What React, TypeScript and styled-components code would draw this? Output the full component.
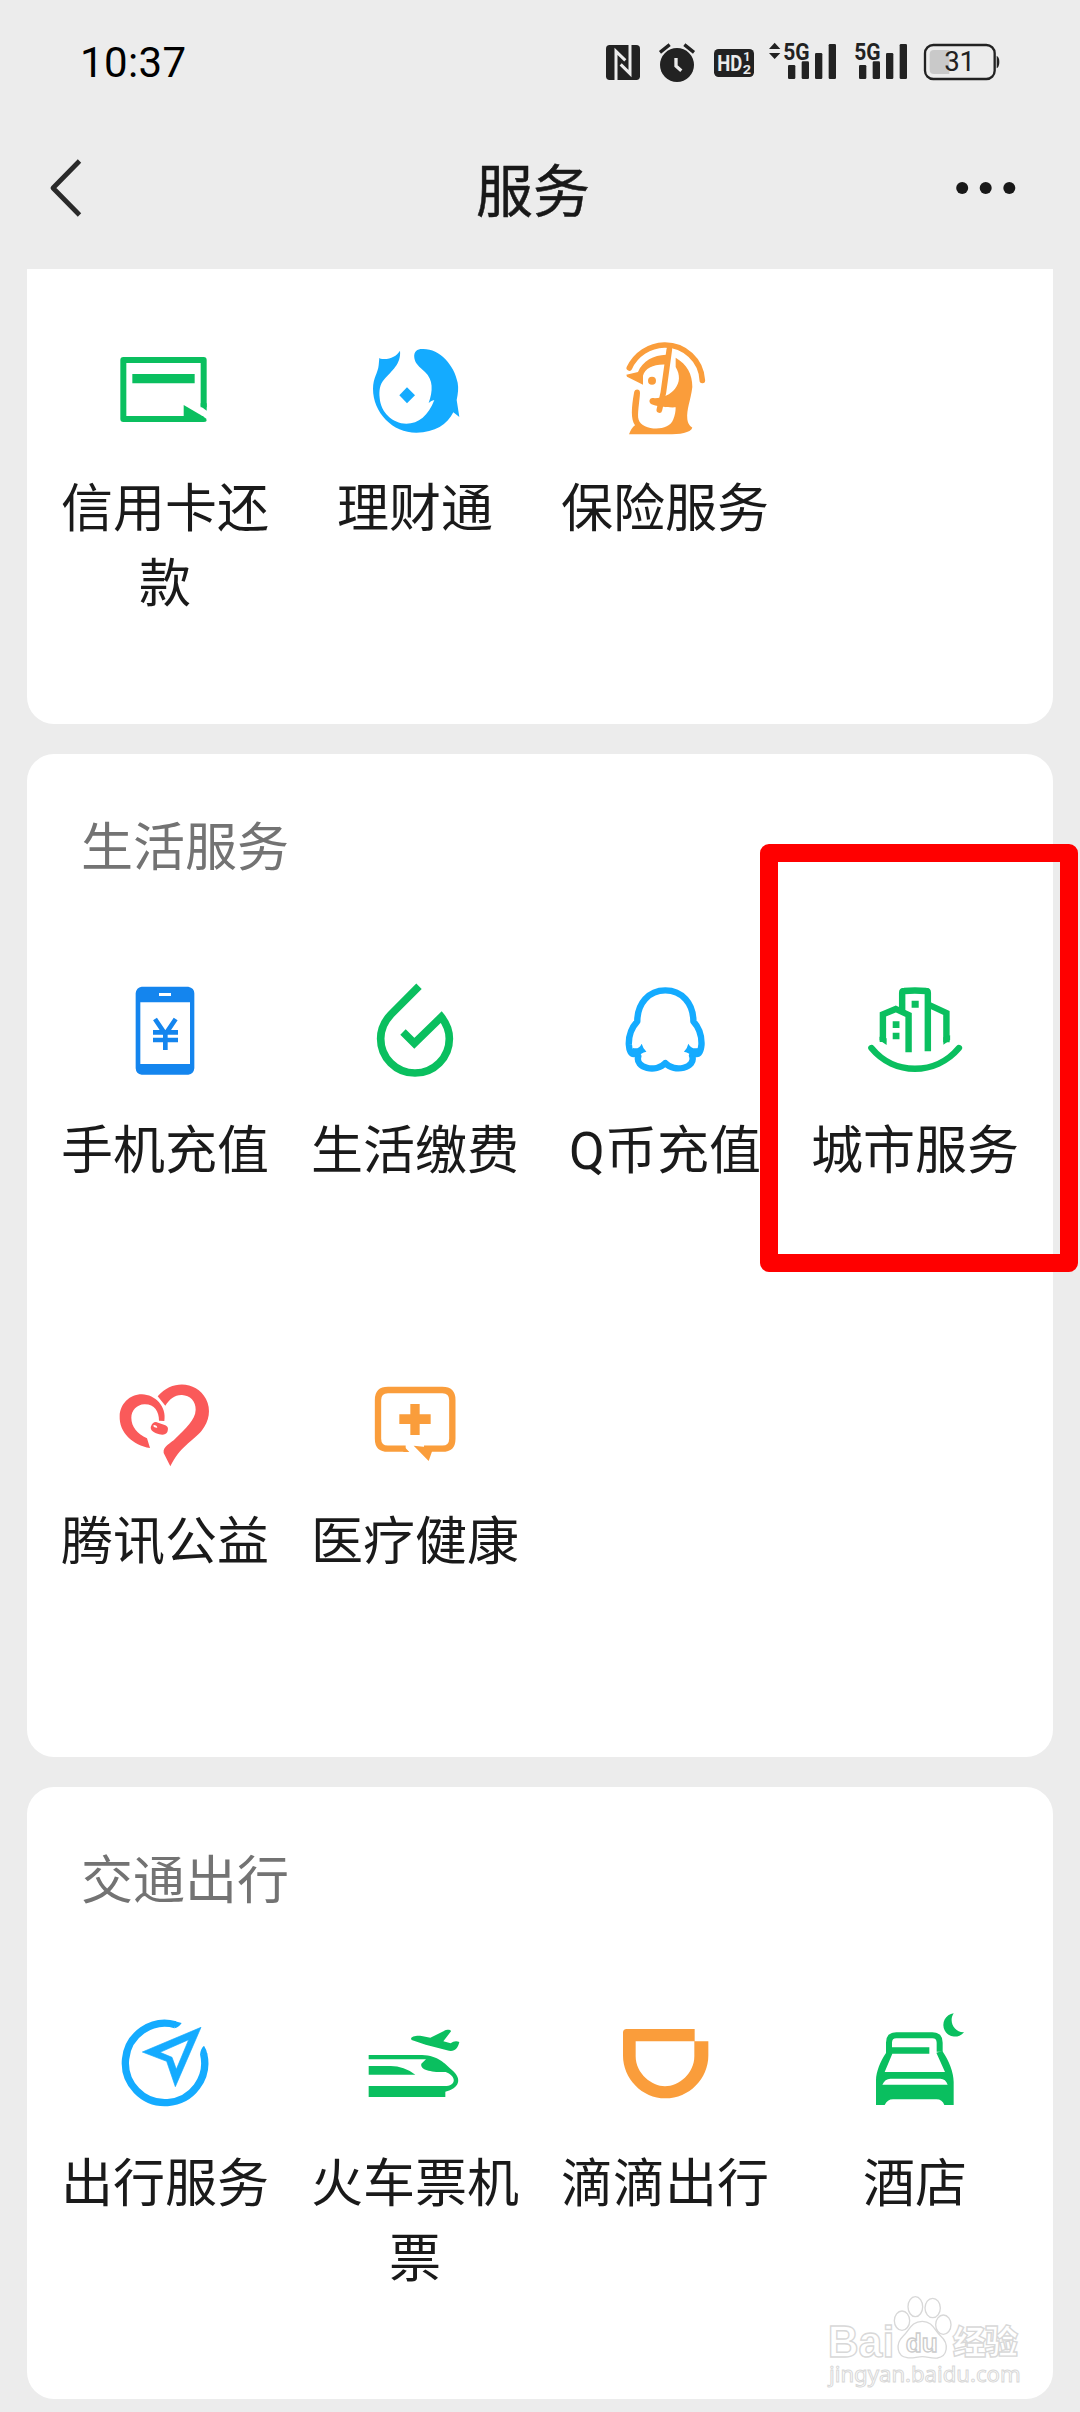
import React from "react";
import styled, { createGlobalStyle } from "styled-components";

const GREEN = "#0abf5f";
const BLUE = "#14abff";
const ORANGE = "#fa9d3b";
const INK = "#222222";

const GlobalStyle = createGlobalStyle`
  * { box-sizing: border-box; }
  body {
    margin: 0;
    background: #ececec;
    font-family: "Noto Sans CJK SC", "Noto Sans", sans-serif;
    color: #1a1a1a;
  }
`;

const Screen = styled.div`
  position: relative;
  width: 1080px;
  height: 2412px;
  overflow: hidden;
  background: #ececec;
  display: flex;
  flex-direction: column;
`;

const StatusBar = styled.header`
  height: 124px;
  padding: 0 80px 0 80px;
  display: flex;
  justify-content: space-between;
  align-items: center;
`;

const Clock = styled.time`
  font-family: Roboto, sans-serif;
  font-weight: 450;
  font-size: 42px;
  line-height: 44px;
  padding-top: 2px;
  letter-spacing: 0.4px;
  color: #000;
`;

const StatusIcons = styled.div`
  display: flex;
  align-items: center;
  height: 44px;
`;

const StatusGlyph = styled.svg<{ $w: number; $gap?: number }>`
  display: block;
  width: ${(p) => p.$w}px;
  height: 44px;
  margin-left: ${(p) => p.$gap ?? 0}px;
  overflow: visible;
`;

const NavBar = styled.nav`
  height: 145px;
  padding: 29px 64px 0 48px;
  display: grid;
  grid-template-columns: 100px 1fr 100px;
  align-items: start;
`;

const NavIcon = styled.svg<{ $end?: boolean }>`
  width: 60px;
  height: 72px;
  justify-self: ${(p) => (p.$end ? "end" : "start")};
`;

const NavTitle = styled.h1`
  margin: -2px 0 0;
  padding-left: 2px;
  text-align: center;
  font-size: 57px;
  font-weight: 400;
  line-height: 72px;
  color: #181818;
  -webkit-text-stroke: 0.5px #181818;
`;

const CardList = styled.main`
  display: flex;
  flex-direction: column;
  gap: 30px;
  padding: 0 27px;
`;

const Card = styled.section<{ $continued?: boolean }>`
  background: #fff;
  border-radius: ${(p) => (p.$continued ? "0 0 27px 27px" : "27px")};
  padding: ${(p) => (p.$continued ? 71 : 52)}px 13px 0;
`;

const CardTitle = styled.h2`
  margin: 0 0 101px;
  padding-left: 41px;
  font-size: 52px;
  font-weight: 400;
  line-height: 75px;
  color: #737373;
`;

const ServiceGrid = styled.div`
  display: grid;
  grid-template-columns: repeat(4, 250px);
  grid-auto-rows: 384px;
  row-gap: 7px;
`;

const Service = styled.div`
  display: flex;
  flex-direction: column;
  align-items: center;
  gap: 32px;
`;

const ServiceIcon = styled.svg`
  flex: none;
  width: 100px;
  height: 100px;
  overflow: visible;
`;

const ServiceLabel = styled.span`
  width: 212px;
  text-align: center;
  font-family: Roboto, "Noto Sans CJK SC", sans-serif;
  font-size: 52px;
  font-weight: 400;
  line-height: 75px;
  color: #1a1a1a;
`;

const Highlight = styled.div`
  position: absolute;
  left: 760px;
  top: 844px;
  width: 318px;
  height: 428px;
  border: 18px solid #ff0000;
  border-radius: 9px;
`;

const Watermark = styled.svg`
  position: absolute;
  left: 820px;
  top: 2290px;
  width: 210px;
  height: 100px;
`;

const NfcIcon = () => (
  <StatusGlyph $w={34} viewBox="78 60 102 132">
    <rect x="78" y="75" width="102" height="105" rx="11" fill={INK} />
    <path d="M108 182V94l28 27M150 73v88l-28-28" fill="none" stroke="#ececec" strokeWidth="9" />
  </StatusGlyph>
);

const AlarmIcon = () => (
  <StatusGlyph $w={36} $gap={19} viewBox="237 60 108 132">
    <circle cx="291" cy="135" r="51" fill={INK} />
    <path d="M240 97l29-23M342 97l-29-23" stroke={INK} strokeWidth="10" />
    <path d="M288 114v24l16 14" fill="none" stroke="#ececec" strokeWidth="10" />
  </StatusGlyph>
);

const HdIcon = () => (
  <StatusGlyph $w={40} $gap={19} viewBox="402 60 120 132">
    <rect x="402" y="87" width="120" height="84" rx="14" fill={INK} />
    <g fill="#ececec" fontFamily="Roboto, sans-serif" fontWeight="700">
      <text x="412" y="153" fontSize="66" textLength="75" lengthAdjust="spacingAndGlyphs">HD</text>
      <text x="490" y="124" fontSize="38">1</text>
      <text x="488" y="161" fontSize="38" textLength="25" lengthAdjust="spacingAndGlyphs">2</text>
    </g>
  </StatusGlyph>
);

const SignalIcon = ({ arrows }: { arrows?: boolean }) => {
  const x = arrows ? 612 : 825;
  return (
    <StatusGlyph
      $w={arrows ? 67 : 52}
      $gap={arrows ? 15 : 19}
      viewBox={arrows ? "567 60 201 132" : "825 60 156 132"}
      fill={INK}
    >
      {arrows && <path d="M567 87l17-19 17 19zM567 99l17 18 17-18z" />}
      <text
        x={x - 2}
        y="119"
        fontFamily="Roboto, sans-serif"
        fontWeight="700"
        fontSize="72"
        textLength="79"
        lengthAdjust="spacingAndGlyphs"
      >
        5G
      </text>
      <rect x={x + 12} y="135" width="22" height="42" rx="4" />
      <rect x={x + 53} y="124" width="22" height="53" rx="4" />
      <rect x={x + 93} y="99" width="22" height="78" rx="4" />
      <rect x={x + 134} y="72" width="22" height="105" rx="4" />
    </StatusGlyph>
  );
};

const BatteryIcon = () => (
  <StatusGlyph $w={76} $gap={17} viewBox="1032 60 228 132">
    <path d="M1108 90h-46q-13 0-13 13v46q0 13 13 13h46z" fill="#c9c9c9" />
    <rect x="1035" y="75" width="209" height="102" rx="25" fill="none" stroke={INK} strokeWidth="7" />
    <path d="M1250 107q8 4 8 19t-8 19z" fill={INK} />
    <text x="1093" y="154" fontFamily="Roboto, sans-serif" fontSize="83" textLength="92" fill={INK}>
      31
    </text>
  </StatusGlyph>
);

/* Service drawings share a grid of three units per pixel. */

const CreditCard = () => (
  <ServiceIcon viewBox="195 60 300 300">
    <path d="M461 262V120H220v177h240" fill="none" stroke={GREEN} strokeWidth="18" strokeLinejoin="round" />
    <path d="M247 162h187v28H247z" fill={GREEN} />
    <path d="M401 288v-33q62 36 66 40 8 11-6 11h-60z" fill={GREEN} />
    <path d="M452 250h18v22l-18-13z" fill={GREEN} />
  </ServiceIcon>
);

const WealthIcon = () => (
  <ServiceIcon viewBox="0 0 300 300" fill={BLUE}>
    <path d="M43 54q4 4 12 3c22 1 40-9 50-25 4 40-25 60-47 86-14 15-16 35-14 56 3 42 38 77 80 77 37 0 66-24 84-71-6 2-12 4-17 9 13-36 14-70-11-93C162 79 151 72 148 54c-3-22 11-28 27-27 50 0 93 49 103 101 3 17 1 32-3 52l8 51-18-14C247 253 210 278 154 278 83 278 24 218 24 146c0-31 15-48 17-70z" />
    <path d="M126 142l24 24-24 24-23-24z" />
  </ServiceIcon>
);

const InsuranceIcon = () => (
  <ServiceIcon viewBox="195 60 300 300">
    <path
      d="M238 144A119 119 0 0 1 343 75A112 112 0 0 1 457 181"
      fill="none"
      stroke={ORANGE}
      strokeWidth="17"
      strokeLinecap="round"
    />
    <path
      d="M229 164l35-8c14-34 47-51 84-52l6 30c-38-4-69 8-75 33v27l-48-24z"
      fill={ORANGE}
    />
    <path
      d="M377 113c34 20 50 49 50 88-5 42-18 66-15 97 2 15 9 21 15 25-5 15-38 20-74 20H237q7-19 18-27c-13-18-11-53-3-97 1-14 19-13 18 0-1 24-9 65-4 80 9 32 90 39 104-1 5-12 7-24 7-36-27 1-58-3-74-10-9-8-3-18 4-18 26 3 54-10 68-28 15-18 16-42 2-65z"
      fill={ORANGE}
    />
    <path d="M358 88l-18 130-12 52" fill="none" stroke={ORANGE} strokeWidth="17" strokeLinecap="round" />
    <circle cx="306" cy="182" r="12" fill={ORANGE} />
  </ServiceIcon>
);

const PhoneIcon = () => (
  <ServiceIcon viewBox="195 66 300 300">
    <path
      fillRule="evenodd"
      d="M275 80h140q18 4 18 20v225q-2 18-18 19H275q-17-2-18-19V100q2-18 18-20zM271 127v185h149V127zM327 99v9h36v-9z"
      fill="#1485ee"
    />
    <path d="M315 177l31 46 31-46M309 217h75M309 240h75M346 214v56" fill="none" stroke="#1485ee" strokeWidth="14" />
  </ServiceIcon>
);

const BillIcon = () => (
  <ServiceIcon viewBox="945 66 300 300">
    <path
      d="M1107 79l-84 84C1004 183 992 207 992 236a103 103 0 1 0 206 0c0-24-9-46-24-65l-81 79-34-34"
      fill="none"
      stroke={GREEN}
      strokeWidth="23"
    />
  </ServiceIcon>
);

const QCoinIcon = () => (
  <ServiceIcon viewBox="192 456 296 300" preserveAspectRatio="none">
    <path
      d="M258 574c0-54 34-93 83-93s83 39 83 93c18 20 25 43 24 70-2 20-7 32-20 27 0 0-5 3-8 6 14 36-53 53-79 22-27 31-91 15-80-20l-8-8c-15 5-19-11-20-27-1-26 8-51 25-70z"
      fill="none"
      stroke={BLUE}
      strokeWidth="19"
      strokeLinejoin="round"
    />
    <path
      d="M245 654q18 5 26-13 4 15 14 24-17 4-26 16l-18-8zM437 654q-18 5-28-13-3 15-13 24 18 4 26 16l18-8z"
      fill={BLUE}
    />
  </ServiceIcon>
);

const CityIcon = () => (
  <ServiceIcon viewBox="932 456 296 300" preserveAspectRatio="none" fill="none" stroke={GREEN} strokeWidth="19">
    <path d="M951 654c67 83 190 83 259 0" strokeLinecap="round" />
    <path d="M985 636v-83l38-16 38 18v112" />
    <path d="M1042 547v-59q0-5 6-5c20-2 43-2 65 0q5 0 5 5v176M1116 522l57 27v88" />
    <path d="M975 620v11l21 14v-20zM1164 622v22l20-14v-14z" fill={GREEN} stroke="none" />
    <path d="M1014 574h20v20h-20zM1014 608h20v20h-20zM1070 512h21v21h-21z" fill={GREEN} stroke="none" />
  </ServiceIcon>
);

const CharityIcon = () => (
  <ServiceIcon viewBox="195 39 300 300" fill="#fa5a5a">
    <path d="M343 183c8-43-28-79-67-80-39 0-66 31-67 65-2 50 40 88 91 96l-9-29c-29-15-47-34-47-62 0-22 17-39 39-40 30-1 44 21 44 49z" />
    <path d="M323 109c46-53 118-43 145 8 16 32 10 66-13 95-27 32-66 48-94 107l-20-40c-3-20 21-28 36-44 29-30 59-54 60-86 1-25-17-43-41-44-21-1-38 13-50 32z" />
    <path
      fillRule="evenodd"
      d="M318 186l28 10c11 5 8 14 6 20-6 11-20 9-34 4-12-5-18-12-15-21 3-8 7-13 15-13zM309 197q4 7 13 6 0-6-8-8z"
    />
  </ServiceIcon>
);

const MedicalIcon = () => (
  <ServiceIcon viewBox="945 39 300 300">
    <path
      d="M1067 266h-53q-30 0-30-30V120q0-30 30-30h163q30 0 30 30v116q0 30-30 30h-55"
      fill="none"
      stroke={ORANGE}
      strokeWidth="19"
    />
    <path d="M1060 257l18 19h-18zM1091 257l45 46 14-40z" fill={ORANGE} />
    <path d="M1081 132h28v31h33v29h-33v33h-28v-33h-33v-29h33z" fill={ORANGE} />
  </ServiceIcon>
);

const TravelIcon = () => (
  <ServiceIcon viewBox="195 75 300 300">
    <path d="M376 104A119 119 0 1 0 461 192" fill="none" stroke={BLUE} strokeWidth="22" />
    <path d="M372 93l23 6q-7 12-21 16zM450 195q1-18 12-28 9 14 10 26z" fill={BLUE} />
    <path
      fillRule="evenodd"
      d="M453 112l-77 178-26-76-73-28zM416 149l-86 38 36 15 13 36z"
      fill={BLUE}
      stroke={BLUE}
      strokeWidth="2"
    />
  </ServiceIcon>
);

const TicketsIcon = () => (
  <ServiceIcon viewBox="945 75 300 300" fill={GREEN}>
    <path d="M956 195h160c50 2 67 25 89 44 34 28 22 56-19 66v16H956v-33h234c32-4 26-32-3-42-39 1-78-5-73-25l14-13H956z" />
    <path d="M956 228h66q40 0 74 26H956z" />
    <path d="M1085 150c-8-9 13-15 30-12l26 5 41-20c10-6 22-3 21 1l-23 30 22 6c8-7 18-8 26-4-5 20-14 31-37 25l-64-17z" />
  </ServiceIcon>
);

const DidiIcon = () => (
  <ServiceIcon viewBox="195 75 300 300" fill={ORANGE}>
    <path d="M230 117h204v37H257v45c0 52 49 90 88 90 42 0 88-39 88-90v-45h42v43c0 68-57 128-129 128-70 0-127-60-127-128v-69q0-11 11-11z" />
  </ServiceIcon>
);

const HotelIcon = () => (
  <ServiceIcon viewBox="945 75 300 300">
    <path d="M1017 187v-29q0-22 22-22h108q22 0 22 22v27" fill="none" stroke={GREEN} strokeWidth="18" />
    <path
      fillRule="evenodd"
      d="M1008 181l15-9h115v19h-111l-23 55h181l-26-58 18-5c20 28 34 65 34 93v69h-28q-6-17-24-17h-130q-17 0-25 17h-26v-74c0-26 14-59 30-82zM997 284h196q-6-18-22-18h-150q-16 0-24 18z"
      fill={GREEN}
    />
    <path d="M1211 70a35 35 0 1 0 31 57c-27 2-48-31-31-57z" fill={GREEN} />
  </ServiceIcon>
);

type Item = { label: string; Icon: () => React.JSX.Element };
type Section = { title?: string; items: Item[] };

const sections: Section[] = [
  {
    items: [
      { label: "信用卡还款", Icon: CreditCard },
      { label: "理财通", Icon: WealthIcon },
      { label: "保险服务", Icon: InsuranceIcon },
    ],
  },
  {
    title: "生活服务",
    items: [
      { label: "手机充值", Icon: PhoneIcon },
      { label: "生活缴费", Icon: BillIcon },
      { label: "Q币充值", Icon: QCoinIcon },
      { label: "城市服务", Icon: CityIcon },
      { label: "腾讯公益", Icon: CharityIcon },
      { label: "医疗健康", Icon: MedicalIcon },
    ],
  },
  {
    title: "交通出行",
    items: [
      { label: "出行服务", Icon: TravelIcon },
      { label: "火车票机票", Icon: TicketsIcon },
      { label: "滴滴出行", Icon: DidiIcon },
      { label: "酒店", Icon: HotelIcon },
    ],
  },
];

const BaiduMark = () => (
  <Watermark viewBox="120 60 630 300" fill="#fff" stroke="#d8d8d8" strokeWidth="4">
    <text
      x="143"
      y="261"
      fontSize="132"
      textLength="200"
      lengthAdjust="spacingAndGlyphs"
      fontFamily="'Liberation Sans', sans-serif"
      fontWeight="700"
    >
      Bai
    </text>
    <ellipse cx="366" cy="152" rx="23" ry="29" />
    <ellipse cx="406" cy="110" rx="22" ry="30" />
    <ellipse cx="458" cy="114" rx="23" ry="29" />
    <ellipse cx="490" cy="164" rx="23" ry="29" />
    <path d="M427 154c32 0 36 28 55 44 27 24 20 62-10 66-20 2-28-4-45-4s-28 6-46 3c-30-4-36-40-12-64 20-18 24-45 58-45z" />
    <text
      x="377"
      y="246"
      fontSize="78"
      textLength="96"
      lengthAdjust="spacingAndGlyphs"
      fontFamily="'Liberation Sans', sans-serif"
      fontWeight="700"
      stroke="#cccccc"
    >
      du
    </text>
    <text x="518" y="252" fontSize="100" fontWeight="900" textLength="196" fontFamily="'Noto Sans CJK SC', sans-serif">
      经验
    </text>
    <text
      x="147"
      y="337"
      fontSize="66"
      strokeWidth="3"
      textLength="575"
      lengthAdjust="spacingAndGlyphs"
      fontFamily="'Noto Sans', sans-serif"
    >
      jingyan.baidu.com
    </text>
  </Watermark>
);

export default function App() {
  return (
    <Screen>
      <GlobalStyle />
      <StatusBar>
        <Clock>10:37</Clock>
        <StatusIcons>
          <NfcIcon />
          <AlarmIcon />
          <HdIcon />
          <SignalIcon arrows />
          <SignalIcon />
          <BatteryIcon />
        </StatusIcons>
      </StatusBar>
      <NavBar>
        <NavIcon viewBox="0 0 60 72">
          <path d="M31.500 8L5 35l26.500 27" fill="none" stroke="#2a2a2a" strokeWidth="4.800" strokeLinejoin="round" />
        </NavIcon>
        <NavTitle>服务</NavTitle>
        <NavIcon $end viewBox="0 0 60 72" fill="#181818">
          <circle cx="6.200" cy="35" r="6" />
          <circle cx="29.700" cy="35" r="6" />
          <circle cx="53.300" cy="35" r="6" />
        </NavIcon>
      </NavBar>
      <CardList>
        {sections.map(({ title, items }, i) => (
          <Card key={i} $continued={!title}>
            {title && <CardTitle>{title}</CardTitle>}
            <ServiceGrid>
              {items.map(({ label, Icon }) => (
                <Service key={label}>
                  <Icon />
                  <ServiceLabel>{label}</ServiceLabel>
                </Service>
              ))}
            </ServiceGrid>
          </Card>
        ))}
      </CardList>
      <Highlight />
      <BaiduMark />
    </Screen>
  );
}
